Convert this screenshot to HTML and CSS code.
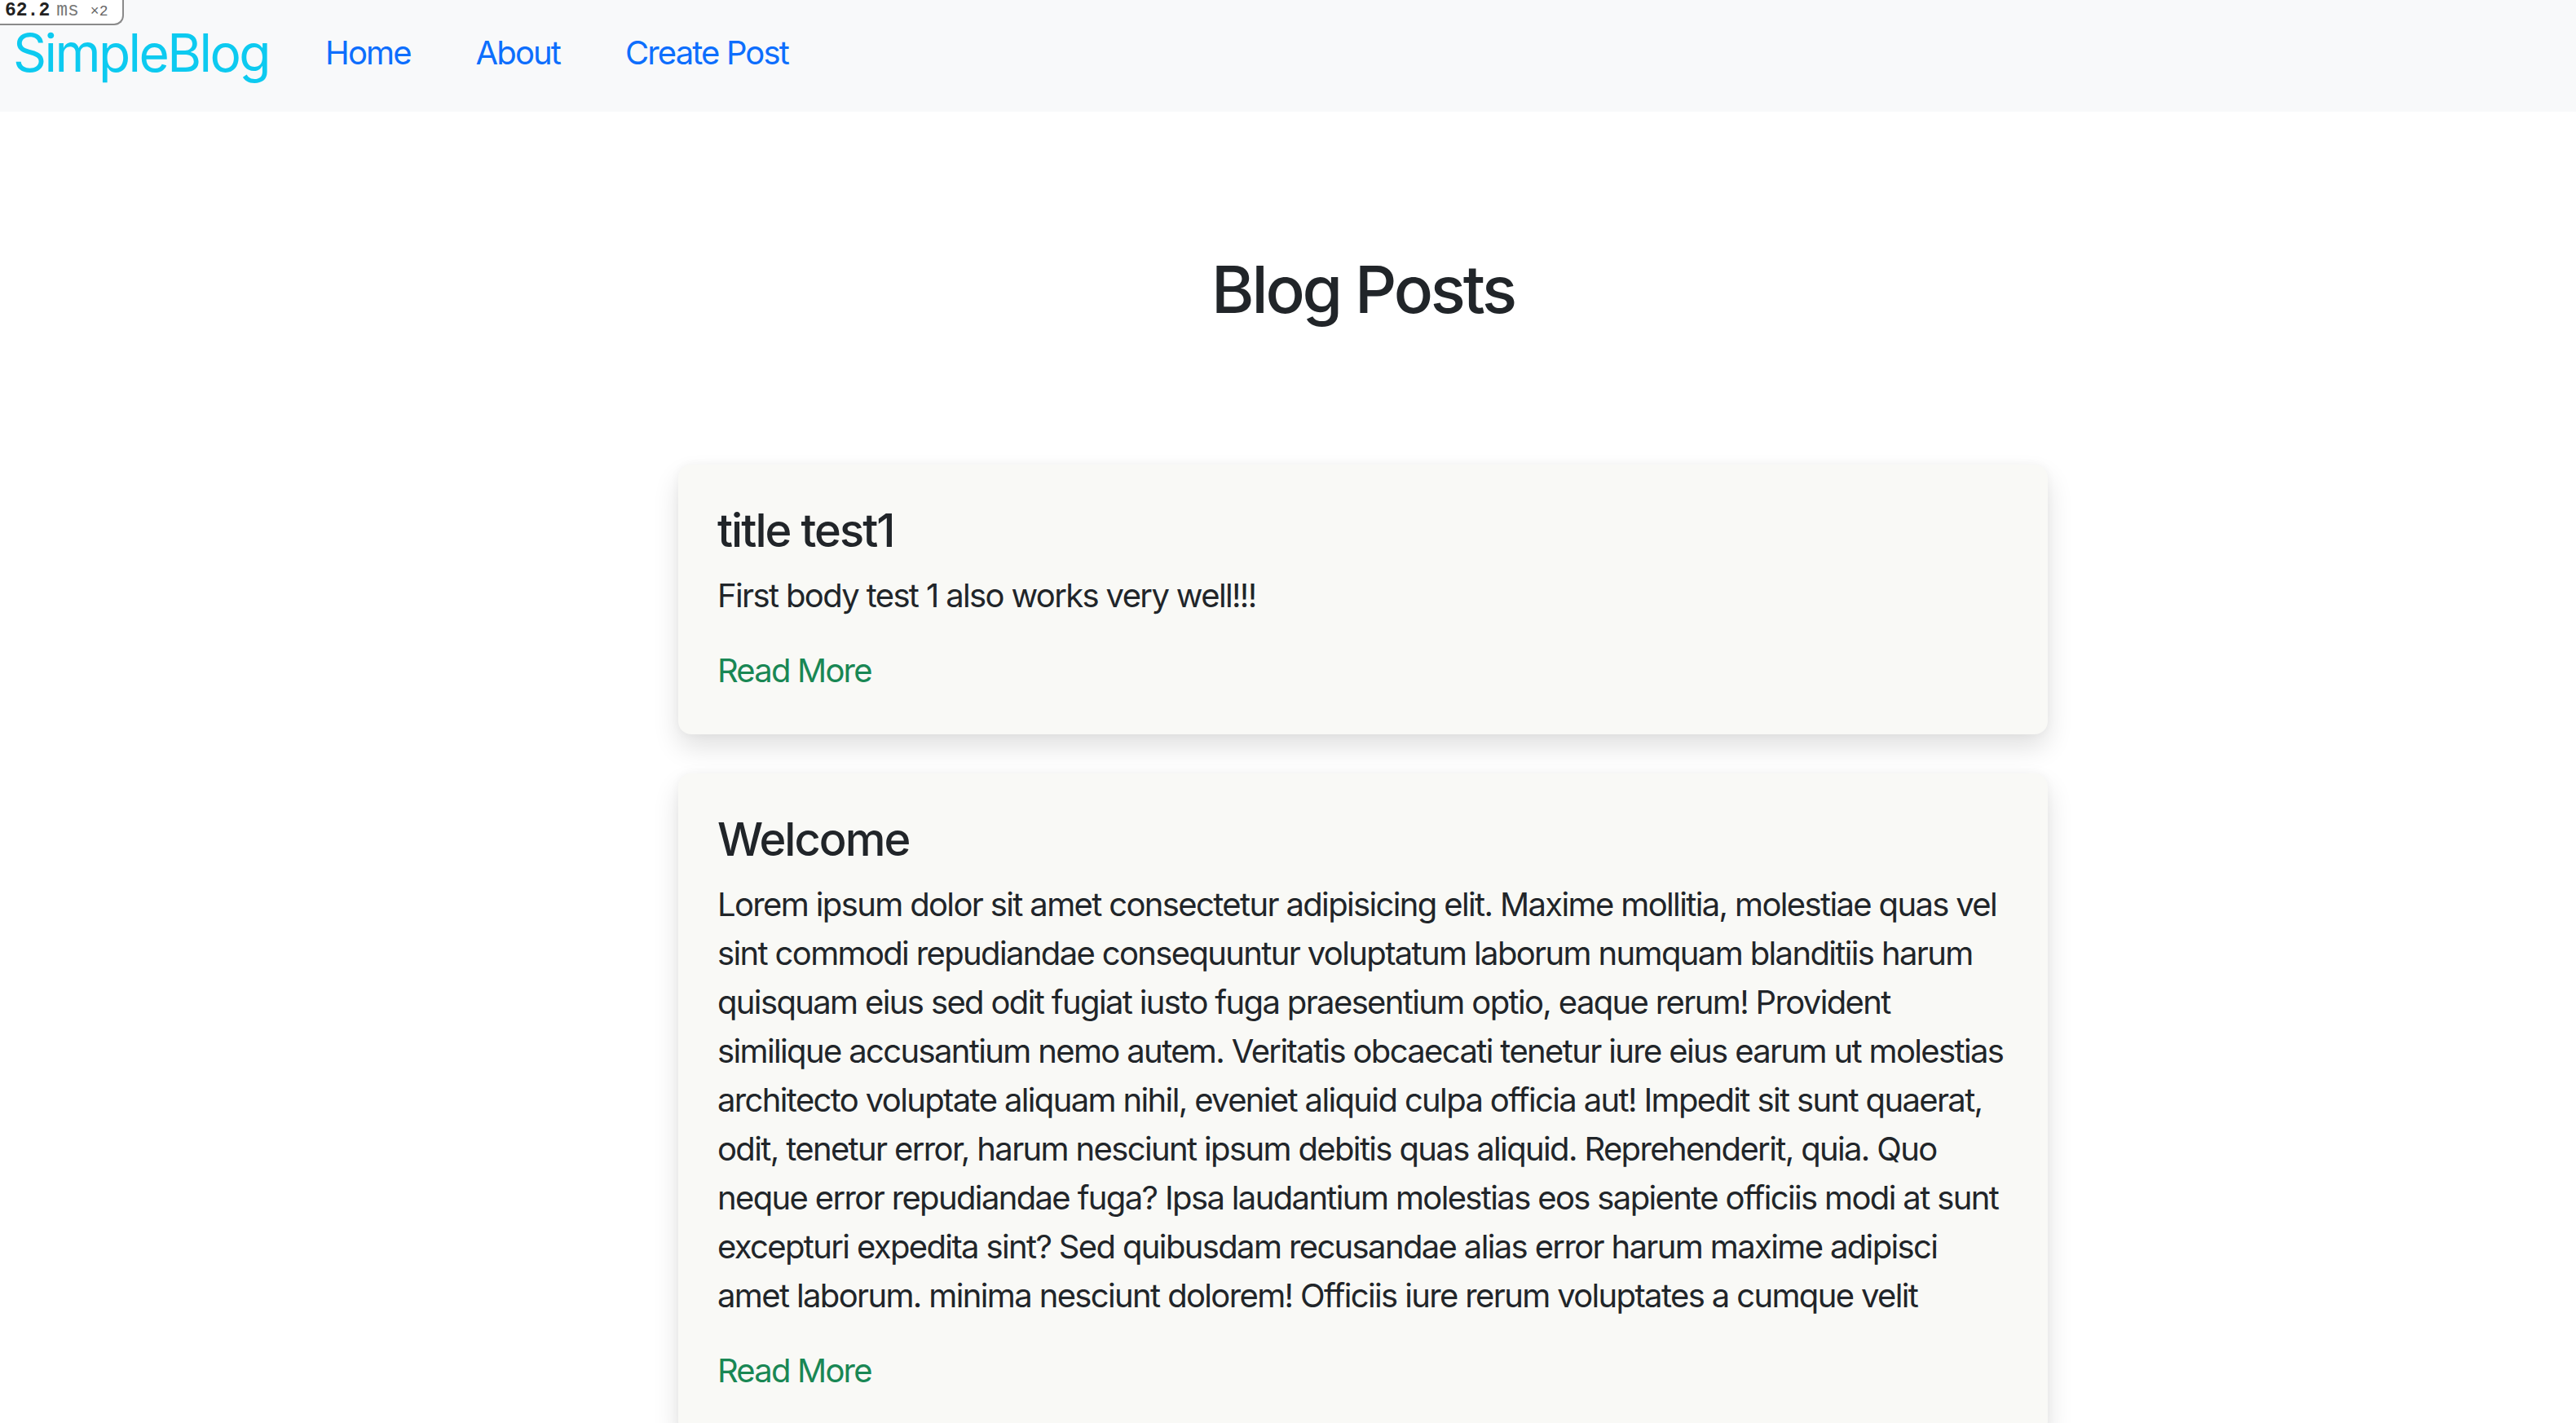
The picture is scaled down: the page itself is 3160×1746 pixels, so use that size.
FILE: index.html
```html
<!DOCTYPE html>
<html lang="en">
<head>
<meta charset="utf-8">
<title>SimpleBlog</title>
<link rel="stylesheet" href="styles.css">
</head>
<body>
<div class="perf-badge"><b>62.2</b><span class="unit">ms</span><span class="mult">×2</span></div>
<nav class="navbar">
  <a class="brand" href="#">SimpleBlog</a>
  <ul class="nav-links">
    <li><a href="#">Home</a></li>
    <li><a href="#">About</a></li>
    <li><a href="#">Create Post</a></li>
  </ul>
</nav>
<main class="main">
  <div class="container">
    <h1 class="page-title">Blog Posts</h1>
    <article class="card">
      <h3 class="card-title">title test1</h3>
      <p class="card-body">First body test 1 also works very well!!!</p>
      <a class="read-more" href="#">Read More</a>
    </article>
    <article class="card">
      <h3 class="card-title">Welcome</h3>
      <p class="card-body">Lorem ipsum dolor sit amet consectetur adipisicing elit. Maxime mollitia, molestiae quas vel sint commodi repudiandae consequuntur voluptatum laborum numquam blanditiis harum quisquam eius sed odit fugiat iusto fuga praesentium optio, eaque rerum! Provident similique accusantium nemo autem. Veritatis obcaecati tenetur iure eius earum ut molestias architecto voluptate aliquam nihil, eveniet aliquid culpa officia aut! Impedit sit sunt quaerat, odit, tenetur error, harum nesciunt ipsum debitis quas aliquid. Reprehenderit, quia. Quo neque error repudiandae fuga? Ipsa laudantium molestias eos sapiente officiis modi at sunt excepturi expedita sint? Sed quibusdam recusandae alias error harum maxime adipisci amet laborum. minima nesciunt dolorem! Officiis iure rerum voluptates a cumque velit</p>
      <a class="read-more" href="#">Read More</a>
    </article>
  </div>
</main>
</body>
</html>
```
FILE: styles.css
```css
* { box-sizing: border-box; }
body {
  margin: 0;
  font-family: Inter, "Noto Sans", sans-serif;
  color: #212529;
  background: #fff;
}
a { text-decoration: none; }

.perf-badge {
  position: absolute;
  top: 0;
  left: 0;
  width: 152px;
  height: 31px;
  background: #fff;
  border-right: 2px solid #8a8a8a;
  border-bottom: 2px solid #8a8a8a;
  border-bottom-right-radius: 12px;
  font-family: "Liberation Mono", "DejaVu Sans Mono", monospace;
  font-size: 23px;
  line-height: 26px;
  padding-left: 6px;
  white-space: nowrap;
  z-index: 5;
}
.perf-badge b { font-weight: 700; color: #222; }
.perf-badge .unit { color: #777; margin-left: 8px; }
.perf-badge .mult { color: #666; font-size: 18px; margin-left: 14px; }

.navbar {
  height: 137px;
  background: #f8f9fa;
  display: flex;
  align-items: center;
  padding: 0 16px 8px;
}
.brand {
  font-size: 64px;
  letter-spacing: -0.04em;
  color: #0dcaf0;
  margin-right: 69px;
}
.nav-links {
  list-style: none;
  display: flex;
  gap: 80px;
  margin: 0;
  padding: 0;
}
.nav-links a {
  font-size: 40px;
  letter-spacing: -0.047em;
  color: #0d6efd;
}

.main { padding-left: 184px; }
.container {
  width: 1680px;
  margin: 0 auto;
}
.page-title {
  font-size: 80px;
  letter-spacing: -0.04em;
  font-weight: 500;
  line-height: 1.2;
  text-align: center;
  margin: 170px 0 167px;
}
.card {
  background: #f9f9f6;
  border-radius: 16px;
  padding: 48px;
  box-shadow: 0 16px 32px rgba(0,0,0,0.12), 0 0 12px rgba(0,0,0,0.04);
  margin-bottom: 48px;
}
.card-title {
  font-size: 56px;
  letter-spacing: -0.035em;
  font-weight: 500;
  line-height: 1.2;
  margin: 0 0 16px;
}
.card-body {
  font-size: 40px;
  letter-spacing: -0.041em;
  line-height: 1.5;
  margin: 0 0 32px;
}
.read-more {
  display: block;
  font-size: 40px;
  letter-spacing: -0.045em;
  line-height: 1.5;
  color: #198754;
}
```
